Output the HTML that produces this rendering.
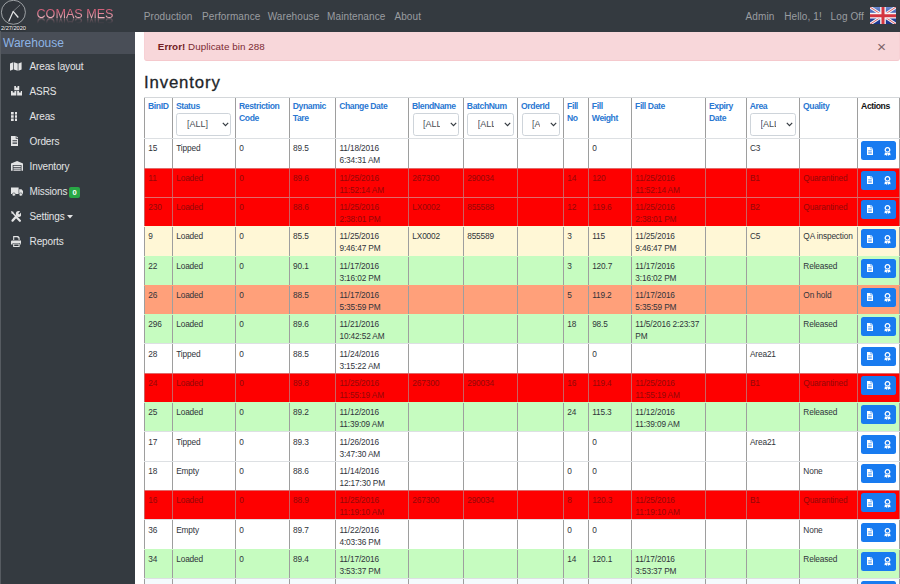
<!DOCTYPE html>
<html lang="en">
<head>
<meta charset="utf-8">
<title>COMAS MES - Inventory</title>
<style>
*{box-sizing:border-box}
html,body{margin:0;padding:0}
body{width:900px;height:584px;overflow:hidden;background:#fff;position:relative;font-family:"Liberation Sans",sans-serif;color:#212529}
a{text-decoration:none;color:inherit}
/* NAVBAR */
#nav{position:absolute;left:0;top:0;width:900px;height:32px;background:#343a40}
#nav .lnk{position:absolute;top:10.6px;font-size:10px;line-height:12px;letter-spacing:.1px;margin-left:-.6px;color:#9a9da0;white-space:nowrap}
#brand{position:absolute;left:36.5px;top:7px;font-size:12.6px;line-height:14px;color:#dc7085;white-space:nowrap;background:linear-gradient(#d3607a 25%,#efb4be 80%);-webkit-background-clip:text;background-clip:text;-webkit-text-fill-color:transparent;-webkit-box-reflect:below -5.8px linear-gradient(transparent 40%,rgba(255,255,255,.7))}
#clock{position:absolute;left:0;top:0}
#date{position:absolute;left:1px;top:25px;font-size:5.7px;line-height:7px;color:#fff;letter-spacing:-.05px;text-shadow:0 0 1.5px #000;white-space:nowrap}
#flag{position:absolute;left:869.8px;top:6.8px}
/* SIDEBAR */
#side{position:absolute;left:0;top:32px;width:134.5px;height:552px;background:#343a40}
#side .hd{position:absolute;left:0;top:0;width:134.5px;height:21.7px;background:#494e57;color:#8db4e6;font-size:12px;line-height:23px;padding-left:3px}
#side .it{position:absolute;left:0;width:134px;height:25px;color:#e3e4e5;font-size:10px;letter-spacing:-.15px;line-height:25px;white-space:nowrap}
#side .it svg{position:absolute;left:10px;top:7px}
#side .it span.t{position:absolute;left:29.6px;top:0}
.badge{display:inline-block;background:#28a745;color:#fff;font-weight:bold;font-size:7.6px;line-height:11px;width:10.6px;text-align:center;letter-spacing:0;border-radius:2px;vertical-align:.5px;margin-left:-.6px}
/* ALERT */
#alert{position:absolute;left:144.3px;top:31.5px;width:755.4px;height:29.2px;background:#f8d7da;border:1px solid #f7d1d5;border-bottom-color:#f5c9cd;border-top:0;border-radius:0 0 3px 3px;color:#7b2a32;font-size:9.8px;letter-spacing:.05px;line-height:12px;padding:9px 0 0 12.5px;white-space:nowrap}
#alert .x{position:absolute;left:731.6px;top:6.4px;font-size:15.5px;line-height:18px;color:#7d6468;font-weight:normal}
h3{position:absolute;left:144px;top:72px;margin:0;font-size:16.8px;letter-spacing:.85px;line-height:22px;font-weight:normal;color:#212529;-webkit-text-stroke:.3px #212529}
/* TABLE */
#tbl{position:absolute;left:144px;top:96.5px;width:756px;font-size:8.3px;letter-spacing:-.14px;line-height:12px;color:#30343a}
.r{display:flex;height:29.333px;border-top:1px solid #dde0e3;background:#fff}
.r.h{height:41.7px;border-top:1px solid #d4d7da}
.c{flex:none;border-left:1px solid #9e9e9e;padding:3.1px 0 0 3.3px;overflow:hidden;white-space:nowrap}
.r.h .c{font-weight:bold;color:#2a78d2;white-space:normal;font-size:8.6px;letter-spacing:-.4px;padding:2.9px 3.5px 0 3px}
.r.h .c.k{color:#111}
.c1{width:27.9px}.c2{width:63.1px}.c3{width:53.8px}.c4{width:46.4px}.c5{width:72.8px}.c6{width:54.9px}.c7{width:54.2px}.c8{width:46px}
.c9{width:24.8px}.c10{width:43.2px}.c11{width:74px}.c12{width:40.6px}.c13{width:53.4px}.c14{width:58.1px}.c15{width:42.8px;border-right:1px solid #9e9e9e}
.red{background:#fe0000;color:#930808}
.red .c{border-left-color:#cb6060}
.red .c15{border-right-color:#cb6060}
.r.red{border-top-color:#e06a6a}
.yel{background:#fff7d6}
.grn{background:#c6fcc0}
.sal{background:#ffa07a}
.lst{background:#f4fbfd}
.yel,.grn,.sal{border-top-color:transparent !important}
.sel{display:block;position:relative;height:23px;margin:.5px 0 0 .6px;letter-spacing:0;border:1px solid #ced4da;border-radius:2.7px;background:#fff;color:#495057;font-weight:normal;font-size:9px;line-height:20.4px;padding:0 18.5px 0 9.4px;white-space:nowrap}
.sel i{display:block;font-style:normal;overflow:hidden;white-space:nowrap;height:21px}
.sel svg{position:absolute;right:1.4px;top:8px}
.btn{display:block;position:relative;width:35.2px;height:19px;margin:-1px 0 0 -.4px;background:#187bf0;border-radius:2.5px}
.btn svg{position:absolute;top:5.3px}
</style>
</head>
<body>
<div id="nav">
  <svg id="clock" width="27" height="26" viewBox="0 0 27 26">
    <circle cx="13.4" cy="12.3" r="12" fill="#30353b" stroke="#b9bcbf" stroke-width="0.8"/>
    <line x1="13.1" y1="11.4" x2="20.1" y2="4.9" stroke="#a9acb0" stroke-width="0.6"/>
    <line x1="13.3" y1="11.2" x2="8.7" y2="21.6" stroke="#e4e5e6" stroke-width="1.2"/>
    <line x1="13.1" y1="11.4" x2="18.3" y2="17.5" stroke="#e4e5e6" stroke-width="1.3"/>
  </svg>
  <div id="date">2/27/2020</div>
  <div id="brand">COMAS MES</div>
  <a class="lnk" style="left:144.3px">Production</a>
  <a class="lnk" style="left:202.7px">Performance</a>
  <a class="lnk" style="left:268.3px">Warehouse</a>
  <a class="lnk" style="left:327.7px">Maintenance</a>
  <a class="lnk" style="left:395px">About</a>
  <a class="lnk" style="left:746.2px">Admin</a>
  <a class="lnk" style="left:784.8px">Hello, 1!</a>
  <a class="lnk" style="left:831.2px">Log Off</a>
  <svg id="flag" width="26" height="17.3" viewBox="0 0 60 40" preserveAspectRatio="none">
    <defs><linearGradient id="fg" x1="0" y1="0" x2="0" y2="1"><stop offset="0" stop-color="#6c8ad0"/><stop offset=".5" stop-color="#2f4ea6"/><stop offset="1" stop-color="#182f86"/></linearGradient></defs>
    <rect width="60" height="40" fill="url(#fg)"/>
    <path d="M0,0 L60,40 M60,0 L0,40" stroke="#f4f4f6" stroke-width="6.5"/>
    <path d="M0,0 L60,40 M60,0 L0,40" stroke="#d8404a" stroke-width="2"/>
    <path d="M30,0 V40 M0,20 H60" stroke="#f6f6f8" stroke-width="13"/>
    <path d="M30,0 V40 M0,20 H60" stroke="#d43540" stroke-width="7"/>
  </svg>
</div>

<div id="side">
  <div class="hd">Warehouse</div>
  <div class="it" style="top:22px"><svg style="left:10.4px;top:7.6px" width="11.6" height="9" viewBox="0 0 12 10" preserveAspectRatio="none"><path fill="#e3e4e5" d="M0,1.6 L3.3,0.4 V8.4 L0,9.6 Z M4,0.4 L8,1.6 V9.6 L4,8.4 Z M8.7,1.6 L12,0.4 V8.4 L8.7,9.6 Z"/></svg><span class="t">Areas layout</span></div>
  <div class="it" style="top:47px"><svg style="left:10.5px;top:7.4px" width="11.5" height="9.4" viewBox="0 0 12 11" preserveAspectRatio="none"><path fill="#e3e4e5" d="M3.4,0 H5.2 V1.8 H6.8 V0 H8.6 V5 H3.4 Z M0,5.8 H1.8 V7.6 H3.6 V5.8 H5.6 V11 H0 Z M6.4,5.8 H8.4 V7.6 H10.2 V5.8 H12 V11 H6.4 Z"/></svg><span class="t">ASRS</span></div>
  <div class="it" style="top:72px"><svg style="left:10.6px;top:8.4px" width="6.7" height="8.9" viewBox="0 0 6.7 8.9"><path fill="#e3e4e5" d="M0,0h2.7v2.4h-2.7z M4,0h2.7v2.4h-2.7z M0,3.25h2.7v2.4h-2.7z M4,3.25h2.7v2.4h-2.7z M0,6.5h2.7v2.4h-2.7z M4,6.5h2.7v2.4h-2.7z"/></svg><span class="t">Areas</span></div>
  <div class="it" style="top:97px"><svg style="left:10.5px;top:7.3px" width="7.6" height="10" viewBox="0 0 8 11" preserveAspectRatio="none"><path fill="#e3e4e5" fill-rule="evenodd" d="M0,0 H5 V3 H8 V11 H0 Z M5.7,0 L8,2.3 H5.7 Z M1.6,4.6 H6.4 V5.4 H1.6 Z M1.6,6.3 H6.4 V7.1 H1.6 Z M1.6,8 H6.4 V8.8 H1.6 Z"/></svg><span class="t">Orders</span></div>
  <div class="it" style="top:122px"><svg style="left:10.6px;top:7.4px" width="12.2" height="9.8" viewBox="0 0 13 10" preserveAspectRatio="none"><path fill="#e3e4e5" fill-rule="evenodd" d="M0,2.6 L6.5,0 L13,2.6 V10 H11.2 V4 H1.8 V10 H0 Z M2.6,4.8 H10.4 V6 H2.6 Z M2.6,6.8 H10.4 V8 H2.6 Z M2.6,8.8 H10.4 V10 H2.6 Z"/></svg><span class="t">Inventory</span></div>
  <div class="it" style="top:147px"><svg style="left:10.6px;top:7.6px" width="12.4" height="9.4" viewBox="0 0 13 10" preserveAspectRatio="none"><path fill="#e3e4e5" d="M0,.6 H8 V7.4 H0 Z M8.6,2.4 H11 L13,4.6 V7.4 H8.6 Z"/><circle cx="3" cy="8" r="1.7" fill="#e3e4e5" stroke="#343a40" stroke-width=".6"/><circle cx="10.3" cy="8" r="1.7" fill="#e3e4e5" stroke="#343a40" stroke-width=".6"/></svg><span class="t">Missions <span class="badge">0</span></span></div>
  <div class="it" style="top:172px"><svg style="left:10.6px;top:6.6px" width="10.4" height="11.2" viewBox="0 0 11 11" preserveAspectRatio="none"><path stroke="#e3e4e5" stroke-width="2.3" stroke-linecap="round" fill="none" d="M1.6,9.4 L5.4,5.6 M9.4,9.6 L6.4,6.6"/><path stroke="#e3e4e5" stroke-width="1.5" fill="none" d="M1.4,1.4 L5.4,5.4"/><path fill="#e3e4e5" d="M0,0 L3,.9 L.9,3 Z"/><circle cx="8" cy="3" r="2.9" fill="#e3e4e5"/><path d="M8.2,2.8 L11,0" stroke="#343a40" stroke-width="1.5"/></svg><span class="t">Settings <svg style="position:static;vertical-align:1px" width="6" height="4" viewBox="0 0 6 4"><path fill="#e3e4e5" d="M0,0 H6 L3,3.4 Z"/></svg></span></div>
  <div class="it" style="top:197px"><svg style="left:10.6px;top:6.6px" width="10.8" height="11" viewBox="0 0 12 11" preserveAspectRatio="none"><path fill="#e3e4e5" fill-rule="evenodd" d="M2.4,0 H8 L9.6,1.6 V4 H8.4 V2.2 H7.4 V1.2 H3.6 V4 H2.4 Z M1.2,4.4 H10.8 Q12,4.4 12,5.6 V8.6 H10.2 V7 H1.8 V8.6 H0 V5.6 Q0,4.4 1.2,4.4 Z M2.4,7.6 H9.6 V11 H2.4 Z M3.6,8.6 V9.9 H8.4 V8.6 Z"/></svg><span class="t">Reports</span></div>
</div>

<div style="position:absolute;left:0;top:31px;width:1px;height:553px;background:#565b61"></div>
<div id="alert"><b style="color:#721c24">Error!</b> Duplicate bin 288<span class="x">×</span></div>
<h3>Inventory</h3>

<div id="tbl">
<div class="r h"><div class="c c1">BinID</div><div class="c c2">Status<span class="sel"><i>[ALL]</i><svg width="7" height="5" viewBox="0 0 7 5"><path d="M.8,.9 L3.5,3.6 L6.2,.9" fill="none" stroke="#343a40" stroke-width="1.2"/></svg></span></div><div class="c c3">Restriction Code</div><div class="c c4">Dynamic Tare</div><div class="c c5">Change Date</div><div class="c c6">BlendName<span class="sel"><i>[ALL]</i><svg width="7" height="5" viewBox="0 0 7 5"><path d="M.8,.9 L3.5,3.6 L6.2,.9" fill="none" stroke="#343a40" stroke-width="1.2"/></svg></span></div><div class="c c7">BatchNum<span class="sel"><i>[ALL]</i><svg width="7" height="5" viewBox="0 0 7 5"><path d="M.8,.9 L3.5,3.6 L6.2,.9" fill="none" stroke="#343a40" stroke-width="1.2"/></svg></span></div><div class="c c8">OrderId<span class="sel"><i>[ALL]</i><svg width="7" height="5" viewBox="0 0 7 5"><path d="M.8,.9 L3.5,3.6 L6.2,.9" fill="none" stroke="#343a40" stroke-width="1.2"/></svg></span></div><div class="c c9">Fill<br>No</div><div class="c c10">Fill Weight</div><div class="c c11">Fill Date</div><div class="c c12">Expiry Date</div><div class="c c13">Area<span class="sel"><i>[ALL]</i><svg width="7" height="5" viewBox="0 0 7 5"><path d="M.8,.9 L3.5,3.6 L6.2,.9" fill="none" stroke="#343a40" stroke-width="1.2"/></svg></span></div><div class="c c14">Quality</div><div class="c c15 k">Actions</div></div>
<div class="r"><div class="c c1">15</div><div class="c c2">Tipped</div><div class="c c3">0</div><div class="c c4">89.5</div><div class="c c5 w">11/18/2016<br>6:34:31 AM</div><div class="c c6"></div><div class="c c7"></div><div class="c c8"></div><div class="c c9"></div><div class="c c10">0</div><div class="c c11"></div><div class="c c12"></div><div class="c c13">C3</div><div class="c c14"></div><div class="c c15"><span class="btn"><svg style="left:6.2px" width="6" height="8" viewBox="0 0 6 8"><path fill="#fff" fill-rule="evenodd" d="M0,0 H3.6 V2.2 H6 V8 H0 Z M4.2,0 L6,1.7 H4.2 Z M1.2,3.6 H4.8 V4.2 H1.2 Z M1.2,4.9 H4.8 V5.5 H1.2 Z M1.2,6.2 H4.8 V6.8 H1.2 Z"/></svg><svg style="left:23.1px" width="7" height="9" viewBox="0 0 7 9"><path fill="#fff" fill-rule="evenodd" d="M3.5,0 A2.9,2.9 0 1 1 3.49,0 Z M3.5,1.3 A1.6,1.6 0 1 0 3.51,1.3 Z M1,5.2 L2.6,6 L3.5,6 L3,9 L1.9,7.9 L.4,8.2 Z M6,5.2 L4.4,6 L3.5,6 L4,9 L5.1,7.9 L6.6,8.2 Z"/></svg></span></div></div>
<div class="r red"><div class="c c1">11</div><div class="c c2">Loaded</div><div class="c c3">0</div><div class="c c4">89.6</div><div class="c c5 w">11/25/2016<br>11:52:14 AM</div><div class="c c6">267300</div><div class="c c7">290034</div><div class="c c8"></div><div class="c c9">14</div><div class="c c10">120</div><div class="c c11 w">11/25/2016<br>11:52:14 AM</div><div class="c c12"></div><div class="c c13">B1</div><div class="c c14">Quarantined</div><div class="c c15"><span class="btn"><svg style="left:6.2px" width="6" height="8" viewBox="0 0 6 8"><path fill="#fff" fill-rule="evenodd" d="M0,0 H3.6 V2.2 H6 V8 H0 Z M4.2,0 L6,1.7 H4.2 Z M1.2,3.6 H4.8 V4.2 H1.2 Z M1.2,4.9 H4.8 V5.5 H1.2 Z M1.2,6.2 H4.8 V6.8 H1.2 Z"/></svg><svg style="left:23.1px" width="7" height="9" viewBox="0 0 7 9"><path fill="#fff" fill-rule="evenodd" d="M3.5,0 A2.9,2.9 0 1 1 3.49,0 Z M3.5,1.3 A1.6,1.6 0 1 0 3.51,1.3 Z M1,5.2 L2.6,6 L3.5,6 L3,9 L1.9,7.9 L.4,8.2 Z M6,5.2 L4.4,6 L3.5,6 L4,9 L5.1,7.9 L6.6,8.2 Z"/></svg></span></div></div>
<div class="r red"><div class="c c1">230</div><div class="c c2">Loaded</div><div class="c c3">0</div><div class="c c4">88.6</div><div class="c c5 w">11/25/2016<br>2:38:01 PM</div><div class="c c6">LX0002</div><div class="c c7">855588</div><div class="c c8"></div><div class="c c9">12</div><div class="c c10">119.6</div><div class="c c11 w">11/25/2016<br>2:38:01 PM</div><div class="c c12"></div><div class="c c13">B2</div><div class="c c14">Quarantined</div><div class="c c15"><span class="btn"><svg style="left:6.2px" width="6" height="8" viewBox="0 0 6 8"><path fill="#fff" fill-rule="evenodd" d="M0,0 H3.6 V2.2 H6 V8 H0 Z M4.2,0 L6,1.7 H4.2 Z M1.2,3.6 H4.8 V4.2 H1.2 Z M1.2,4.9 H4.8 V5.5 H1.2 Z M1.2,6.2 H4.8 V6.8 H1.2 Z"/></svg><svg style="left:23.1px" width="7" height="9" viewBox="0 0 7 9"><path fill="#fff" fill-rule="evenodd" d="M3.5,0 A2.9,2.9 0 1 1 3.49,0 Z M3.5,1.3 A1.6,1.6 0 1 0 3.51,1.3 Z M1,5.2 L2.6,6 L3.5,6 L3,9 L1.9,7.9 L.4,8.2 Z M6,5.2 L4.4,6 L3.5,6 L4,9 L5.1,7.9 L6.6,8.2 Z"/></svg></span></div></div>
<div class="r yel"><div class="c c1">9</div><div class="c c2">Loaded</div><div class="c c3">0</div><div class="c c4">85.5</div><div class="c c5 w">11/25/2016<br>9:46:47 PM</div><div class="c c6">LX0002</div><div class="c c7">855589</div><div class="c c8"></div><div class="c c9">3</div><div class="c c10">115</div><div class="c c11 w">11/25/2016<br>9:46:47 PM</div><div class="c c12"></div><div class="c c13">C5</div><div class="c c14">QA inspection</div><div class="c c15"><span class="btn"><svg style="left:6.2px" width="6" height="8" viewBox="0 0 6 8"><path fill="#fff" fill-rule="evenodd" d="M0,0 H3.6 V2.2 H6 V8 H0 Z M4.2,0 L6,1.7 H4.2 Z M1.2,3.6 H4.8 V4.2 H1.2 Z M1.2,4.9 H4.8 V5.5 H1.2 Z M1.2,6.2 H4.8 V6.8 H1.2 Z"/></svg><svg style="left:23.1px" width="7" height="9" viewBox="0 0 7 9"><path fill="#fff" fill-rule="evenodd" d="M3.5,0 A2.9,2.9 0 1 1 3.49,0 Z M3.5,1.3 A1.6,1.6 0 1 0 3.51,1.3 Z M1,5.2 L2.6,6 L3.5,6 L3,9 L1.9,7.9 L.4,8.2 Z M6,5.2 L4.4,6 L3.5,6 L4,9 L5.1,7.9 L6.6,8.2 Z"/></svg></span></div></div>
<div class="r grn"><div class="c c1">22</div><div class="c c2">Loaded</div><div class="c c3">0</div><div class="c c4">90.1</div><div class="c c5 w">11/17/2016<br>3:16:02 PM</div><div class="c c6"></div><div class="c c7"></div><div class="c c8"></div><div class="c c9">3</div><div class="c c10">120.7</div><div class="c c11 w">11/17/2016<br>3:16:02 PM</div><div class="c c12"></div><div class="c c13"></div><div class="c c14">Released</div><div class="c c15"><span class="btn"><svg style="left:6.2px" width="6" height="8" viewBox="0 0 6 8"><path fill="#fff" fill-rule="evenodd" d="M0,0 H3.6 V2.2 H6 V8 H0 Z M4.2,0 L6,1.7 H4.2 Z M1.2,3.6 H4.8 V4.2 H1.2 Z M1.2,4.9 H4.8 V5.5 H1.2 Z M1.2,6.2 H4.8 V6.8 H1.2 Z"/></svg><svg style="left:23.1px" width="7" height="9" viewBox="0 0 7 9"><path fill="#fff" fill-rule="evenodd" d="M3.5,0 A2.9,2.9 0 1 1 3.49,0 Z M3.5,1.3 A1.6,1.6 0 1 0 3.51,1.3 Z M1,5.2 L2.6,6 L3.5,6 L3,9 L1.9,7.9 L.4,8.2 Z M6,5.2 L4.4,6 L3.5,6 L4,9 L5.1,7.9 L6.6,8.2 Z"/></svg></span></div></div>
<div class="r sal"><div class="c c1">26</div><div class="c c2">Loaded</div><div class="c c3">0</div><div class="c c4">88.5</div><div class="c c5 w">11/17/2016<br>5:35:59 PM</div><div class="c c6"></div><div class="c c7"></div><div class="c c8"></div><div class="c c9">5</div><div class="c c10">119.2</div><div class="c c11 w">11/17/2016<br>5:35:59 PM</div><div class="c c12"></div><div class="c c13"></div><div class="c c14">On hold</div><div class="c c15"><span class="btn"><svg style="left:6.2px" width="6" height="8" viewBox="0 0 6 8"><path fill="#fff" fill-rule="evenodd" d="M0,0 H3.6 V2.2 H6 V8 H0 Z M4.2,0 L6,1.7 H4.2 Z M1.2,3.6 H4.8 V4.2 H1.2 Z M1.2,4.9 H4.8 V5.5 H1.2 Z M1.2,6.2 H4.8 V6.8 H1.2 Z"/></svg><svg style="left:23.1px" width="7" height="9" viewBox="0 0 7 9"><path fill="#fff" fill-rule="evenodd" d="M3.5,0 A2.9,2.9 0 1 1 3.49,0 Z M3.5,1.3 A1.6,1.6 0 1 0 3.51,1.3 Z M1,5.2 L2.6,6 L3.5,6 L3,9 L1.9,7.9 L.4,8.2 Z M6,5.2 L4.4,6 L3.5,6 L4,9 L5.1,7.9 L6.6,8.2 Z"/></svg></span></div></div>
<div class="r grn"><div class="c c1">296</div><div class="c c2">Loaded</div><div class="c c3">0</div><div class="c c4">89.6</div><div class="c c5 w">11/21/2016<br>10:42:52 AM</div><div class="c c6"></div><div class="c c7"></div><div class="c c8"></div><div class="c c9">18</div><div class="c c10">98.5</div><div class="c c11 w">11/5/2016 2:23:37<br>PM</div><div class="c c12"></div><div class="c c13"></div><div class="c c14">Released</div><div class="c c15"><span class="btn"><svg style="left:6.2px" width="6" height="8" viewBox="0 0 6 8"><path fill="#fff" fill-rule="evenodd" d="M0,0 H3.6 V2.2 H6 V8 H0 Z M4.2,0 L6,1.7 H4.2 Z M1.2,3.6 H4.8 V4.2 H1.2 Z M1.2,4.9 H4.8 V5.5 H1.2 Z M1.2,6.2 H4.8 V6.8 H1.2 Z"/></svg><svg style="left:23.1px" width="7" height="9" viewBox="0 0 7 9"><path fill="#fff" fill-rule="evenodd" d="M3.5,0 A2.9,2.9 0 1 1 3.49,0 Z M3.5,1.3 A1.6,1.6 0 1 0 3.51,1.3 Z M1,5.2 L2.6,6 L3.5,6 L3,9 L1.9,7.9 L.4,8.2 Z M6,5.2 L4.4,6 L3.5,6 L4,9 L5.1,7.9 L6.6,8.2 Z"/></svg></span></div></div>
<div class="r"><div class="c c1">28</div><div class="c c2">Tipped</div><div class="c c3">0</div><div class="c c4">88.5</div><div class="c c5 w">11/24/2016<br>3:15:22 AM</div><div class="c c6"></div><div class="c c7"></div><div class="c c8"></div><div class="c c9"></div><div class="c c10">0</div><div class="c c11"></div><div class="c c12"></div><div class="c c13">Area21</div><div class="c c14"></div><div class="c c15"><span class="btn"><svg style="left:6.2px" width="6" height="8" viewBox="0 0 6 8"><path fill="#fff" fill-rule="evenodd" d="M0,0 H3.6 V2.2 H6 V8 H0 Z M4.2,0 L6,1.7 H4.2 Z M1.2,3.6 H4.8 V4.2 H1.2 Z M1.2,4.9 H4.8 V5.5 H1.2 Z M1.2,6.2 H4.8 V6.8 H1.2 Z"/></svg><svg style="left:23.1px" width="7" height="9" viewBox="0 0 7 9"><path fill="#fff" fill-rule="evenodd" d="M3.5,0 A2.9,2.9 0 1 1 3.49,0 Z M3.5,1.3 A1.6,1.6 0 1 0 3.51,1.3 Z M1,5.2 L2.6,6 L3.5,6 L3,9 L1.9,7.9 L.4,8.2 Z M6,5.2 L4.4,6 L3.5,6 L4,9 L5.1,7.9 L6.6,8.2 Z"/></svg></span></div></div>
<div class="r red"><div class="c c1">24</div><div class="c c2">Loaded</div><div class="c c3">0</div><div class="c c4">89.8</div><div class="c c5 w">11/25/2016<br>11:55:19 AM</div><div class="c c6">267300</div><div class="c c7">290034</div><div class="c c8"></div><div class="c c9">16</div><div class="c c10">119.4</div><div class="c c11 w">11/25/2016<br>11:55:19 AM</div><div class="c c12"></div><div class="c c13">B1</div><div class="c c14">Quarantined</div><div class="c c15"><span class="btn"><svg style="left:6.2px" width="6" height="8" viewBox="0 0 6 8"><path fill="#fff" fill-rule="evenodd" d="M0,0 H3.6 V2.2 H6 V8 H0 Z M4.2,0 L6,1.7 H4.2 Z M1.2,3.6 H4.8 V4.2 H1.2 Z M1.2,4.9 H4.8 V5.5 H1.2 Z M1.2,6.2 H4.8 V6.8 H1.2 Z"/></svg><svg style="left:23.1px" width="7" height="9" viewBox="0 0 7 9"><path fill="#fff" fill-rule="evenodd" d="M3.5,0 A2.9,2.9 0 1 1 3.49,0 Z M3.5,1.3 A1.6,1.6 0 1 0 3.51,1.3 Z M1,5.2 L2.6,6 L3.5,6 L3,9 L1.9,7.9 L.4,8.2 Z M6,5.2 L4.4,6 L3.5,6 L4,9 L5.1,7.9 L6.6,8.2 Z"/></svg></span></div></div>
<div class="r grn"><div class="c c1">25</div><div class="c c2">Loaded</div><div class="c c3">0</div><div class="c c4">89.2</div><div class="c c5 w">11/12/2016<br>11:39:09 AM</div><div class="c c6"></div><div class="c c7"></div><div class="c c8"></div><div class="c c9">24</div><div class="c c10">115.3</div><div class="c c11 w">11/12/2016<br>11:39:09 AM</div><div class="c c12"></div><div class="c c13"></div><div class="c c14">Released</div><div class="c c15"><span class="btn"><svg style="left:6.2px" width="6" height="8" viewBox="0 0 6 8"><path fill="#fff" fill-rule="evenodd" d="M0,0 H3.6 V2.2 H6 V8 H0 Z M4.2,0 L6,1.7 H4.2 Z M1.2,3.6 H4.8 V4.2 H1.2 Z M1.2,4.9 H4.8 V5.5 H1.2 Z M1.2,6.2 H4.8 V6.8 H1.2 Z"/></svg><svg style="left:23.1px" width="7" height="9" viewBox="0 0 7 9"><path fill="#fff" fill-rule="evenodd" d="M3.5,0 A2.9,2.9 0 1 1 3.49,0 Z M3.5,1.3 A1.6,1.6 0 1 0 3.51,1.3 Z M1,5.2 L2.6,6 L3.5,6 L3,9 L1.9,7.9 L.4,8.2 Z M6,5.2 L4.4,6 L3.5,6 L4,9 L5.1,7.9 L6.6,8.2 Z"/></svg></span></div></div>
<div class="r"><div class="c c1">17</div><div class="c c2">Tipped</div><div class="c c3">0</div><div class="c c4">89.3</div><div class="c c5 w">11/26/2016<br>3:47:30 AM</div><div class="c c6"></div><div class="c c7"></div><div class="c c8"></div><div class="c c9"></div><div class="c c10">0</div><div class="c c11"></div><div class="c c12"></div><div class="c c13">Area21</div><div class="c c14"></div><div class="c c15"><span class="btn"><svg style="left:6.2px" width="6" height="8" viewBox="0 0 6 8"><path fill="#fff" fill-rule="evenodd" d="M0,0 H3.6 V2.2 H6 V8 H0 Z M4.2,0 L6,1.7 H4.2 Z M1.2,3.6 H4.8 V4.2 H1.2 Z M1.2,4.9 H4.8 V5.5 H1.2 Z M1.2,6.2 H4.8 V6.8 H1.2 Z"/></svg><svg style="left:23.1px" width="7" height="9" viewBox="0 0 7 9"><path fill="#fff" fill-rule="evenodd" d="M3.5,0 A2.9,2.9 0 1 1 3.49,0 Z M3.5,1.3 A1.6,1.6 0 1 0 3.51,1.3 Z M1,5.2 L2.6,6 L3.5,6 L3,9 L1.9,7.9 L.4,8.2 Z M6,5.2 L4.4,6 L3.5,6 L4,9 L5.1,7.9 L6.6,8.2 Z"/></svg></span></div></div>
<div class="r"><div class="c c1">18</div><div class="c c2">Empty</div><div class="c c3">0</div><div class="c c4">88.6</div><div class="c c5 w">11/14/2016<br>12:17:30 PM</div><div class="c c6"></div><div class="c c7"></div><div class="c c8"></div><div class="c c9">0</div><div class="c c10">0</div><div class="c c11"></div><div class="c c12"></div><div class="c c13"></div><div class="c c14">None</div><div class="c c15"><span class="btn"><svg style="left:6.2px" width="6" height="8" viewBox="0 0 6 8"><path fill="#fff" fill-rule="evenodd" d="M0,0 H3.6 V2.2 H6 V8 H0 Z M4.2,0 L6,1.7 H4.2 Z M1.2,3.6 H4.8 V4.2 H1.2 Z M1.2,4.9 H4.8 V5.5 H1.2 Z M1.2,6.2 H4.8 V6.8 H1.2 Z"/></svg><svg style="left:23.1px" width="7" height="9" viewBox="0 0 7 9"><path fill="#fff" fill-rule="evenodd" d="M3.5,0 A2.9,2.9 0 1 1 3.49,0 Z M3.5,1.3 A1.6,1.6 0 1 0 3.51,1.3 Z M1,5.2 L2.6,6 L3.5,6 L3,9 L1.9,7.9 L.4,8.2 Z M6,5.2 L4.4,6 L3.5,6 L4,9 L5.1,7.9 L6.6,8.2 Z"/></svg></span></div></div>
<div class="r red"><div class="c c1">16</div><div class="c c2">Loaded</div><div class="c c3">0</div><div class="c c4">88.9</div><div class="c c5 w">11/25/2016<br>11:19:10 AM</div><div class="c c6">267300</div><div class="c c7">290034</div><div class="c c8"></div><div class="c c9">8</div><div class="c c10">120.3</div><div class="c c11 w">11/25/2016<br>11:19:10 AM</div><div class="c c12"></div><div class="c c13">B1</div><div class="c c14">Quarantined</div><div class="c c15"><span class="btn"><svg style="left:6.2px" width="6" height="8" viewBox="0 0 6 8"><path fill="#fff" fill-rule="evenodd" d="M0,0 H3.6 V2.2 H6 V8 H0 Z M4.2,0 L6,1.7 H4.2 Z M1.2,3.6 H4.8 V4.2 H1.2 Z M1.2,4.9 H4.8 V5.5 H1.2 Z M1.2,6.2 H4.8 V6.8 H1.2 Z"/></svg><svg style="left:23.1px" width="7" height="9" viewBox="0 0 7 9"><path fill="#fff" fill-rule="evenodd" d="M3.5,0 A2.9,2.9 0 1 1 3.49,0 Z M3.5,1.3 A1.6,1.6 0 1 0 3.51,1.3 Z M1,5.2 L2.6,6 L3.5,6 L3,9 L1.9,7.9 L.4,8.2 Z M6,5.2 L4.4,6 L3.5,6 L4,9 L5.1,7.9 L6.6,8.2 Z"/></svg></span></div></div>
<div class="r"><div class="c c1">36</div><div class="c c2">Empty</div><div class="c c3">0</div><div class="c c4">89.7</div><div class="c c5 w">11/22/2016<br>4:03:36 PM</div><div class="c c6"></div><div class="c c7"></div><div class="c c8"></div><div class="c c9">0</div><div class="c c10">0</div><div class="c c11"></div><div class="c c12"></div><div class="c c13"></div><div class="c c14">None</div><div class="c c15"><span class="btn"><svg style="left:6.2px" width="6" height="8" viewBox="0 0 6 8"><path fill="#fff" fill-rule="evenodd" d="M0,0 H3.6 V2.2 H6 V8 H0 Z M4.2,0 L6,1.7 H4.2 Z M1.2,3.6 H4.8 V4.2 H1.2 Z M1.2,4.9 H4.8 V5.5 H1.2 Z M1.2,6.2 H4.8 V6.8 H1.2 Z"/></svg><svg style="left:23.1px" width="7" height="9" viewBox="0 0 7 9"><path fill="#fff" fill-rule="evenodd" d="M3.5,0 A2.9,2.9 0 1 1 3.49,0 Z M3.5,1.3 A1.6,1.6 0 1 0 3.51,1.3 Z M1,5.2 L2.6,6 L3.5,6 L3,9 L1.9,7.9 L.4,8.2 Z M6,5.2 L4.4,6 L3.5,6 L4,9 L5.1,7.9 L6.6,8.2 Z"/></svg></span></div></div>
<div class="r grn"><div class="c c1">34</div><div class="c c2">Loaded</div><div class="c c3">0</div><div class="c c4">89.4</div><div class="c c5 w">11/17/2016<br>3:53:37 PM</div><div class="c c6"></div><div class="c c7"></div><div class="c c8"></div><div class="c c9">14</div><div class="c c10">120.1</div><div class="c c11 w">11/17/2016<br>3:53:37 PM</div><div class="c c12"></div><div class="c c13"></div><div class="c c14">Released</div><div class="c c15"><span class="btn"><svg style="left:6.2px" width="6" height="8" viewBox="0 0 6 8"><path fill="#fff" fill-rule="evenodd" d="M0,0 H3.6 V2.2 H6 V8 H0 Z M4.2,0 L6,1.7 H4.2 Z M1.2,3.6 H4.8 V4.2 H1.2 Z M1.2,4.9 H4.8 V5.5 H1.2 Z M1.2,6.2 H4.8 V6.8 H1.2 Z"/></svg><svg style="left:23.1px" width="7" height="9" viewBox="0 0 7 9"><path fill="#fff" fill-rule="evenodd" d="M3.5,0 A2.9,2.9 0 1 1 3.49,0 Z M3.5,1.3 A1.6,1.6 0 1 0 3.51,1.3 Z M1,5.2 L2.6,6 L3.5,6 L3,9 L1.9,7.9 L.4,8.2 Z M6,5.2 L4.4,6 L3.5,6 L4,9 L5.1,7.9 L6.6,8.2 Z"/></svg></span></div></div>
<div class="r lst"><div class="c c1"></div><div class="c c2"></div><div class="c c3"></div><div class="c c4"></div><div class="c c5"></div><div class="c c6"></div><div class="c c7"></div><div class="c c8"></div><div class="c c9"></div><div class="c c10"></div><div class="c c11"></div><div class="c c12"></div><div class="c c13"></div><div class="c c14"></div><div class="c c15"><span class="btn"><svg style="left:6.2px" width="6" height="8" viewBox="0 0 6 8"><path fill="#fff" fill-rule="evenodd" d="M0,0 H3.6 V2.2 H6 V8 H0 Z M4.2,0 L6,1.7 H4.2 Z M1.2,3.6 H4.8 V4.2 H1.2 Z M1.2,4.9 H4.8 V5.5 H1.2 Z M1.2,6.2 H4.8 V6.8 H1.2 Z"/></svg><svg style="left:23.1px" width="7" height="9" viewBox="0 0 7 9"><path fill="#fff" fill-rule="evenodd" d="M3.5,0 A2.9,2.9 0 1 1 3.49,0 Z M3.5,1.3 A1.6,1.6 0 1 0 3.51,1.3 Z M1,5.2 L2.6,6 L3.5,6 L3,9 L1.9,7.9 L.4,8.2 Z M6,5.2 L4.4,6 L3.5,6 L4,9 L5.1,7.9 L6.6,8.2 Z"/></svg></span></div></div>
</div>
</body>
</html>
